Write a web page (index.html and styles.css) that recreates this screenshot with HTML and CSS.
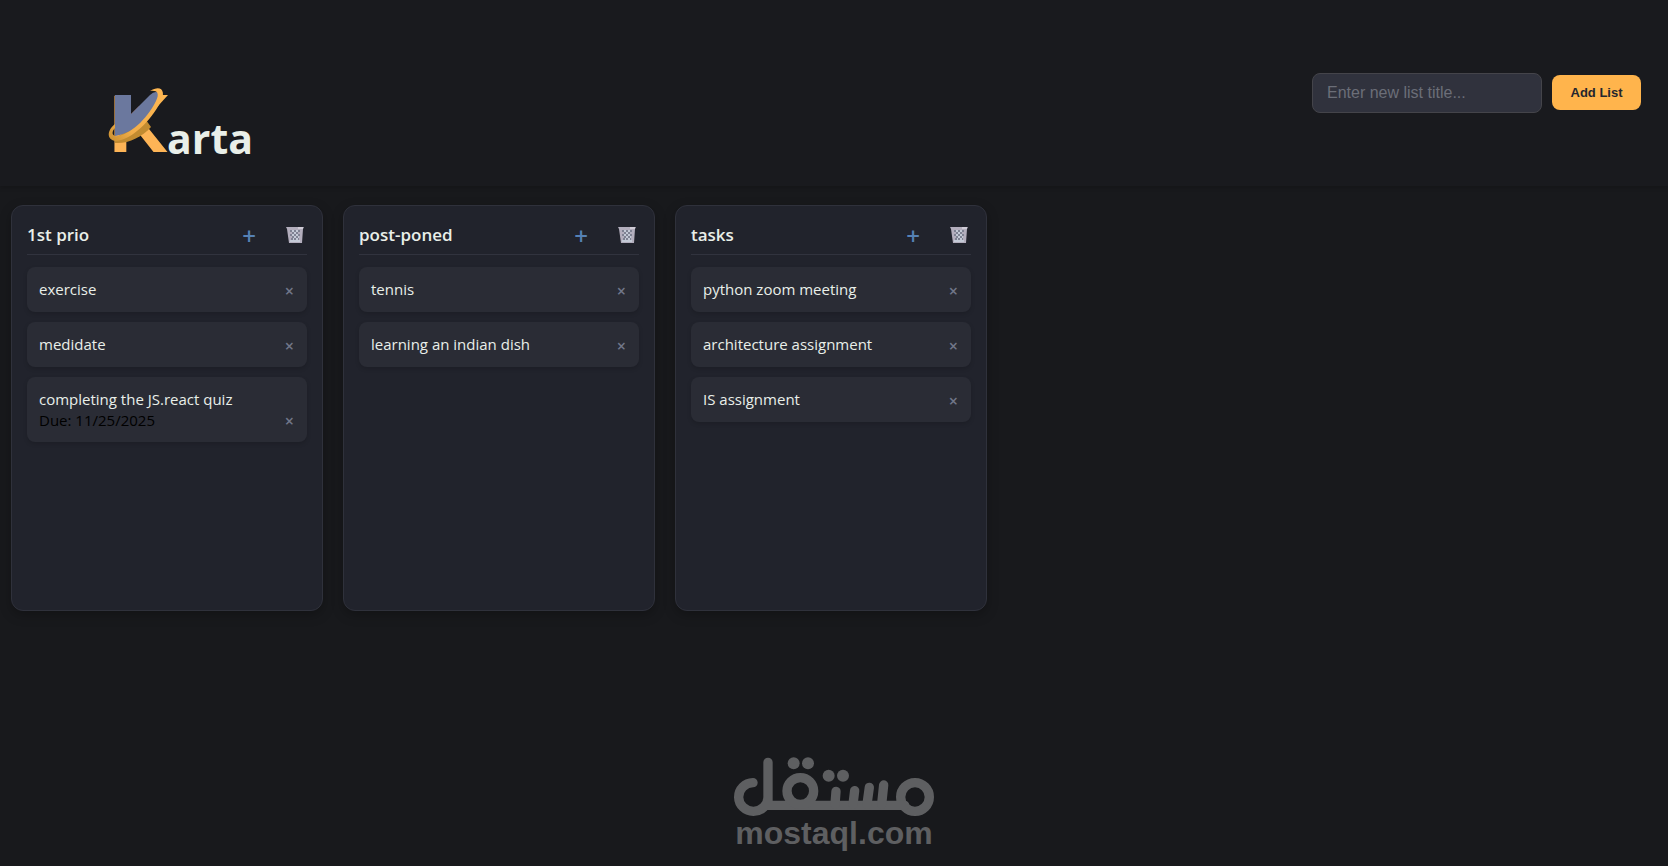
FILE: index.html
```html
<!DOCTYPE html>
<html lang="en">

<head>
    <meta charset="UTF-8">
    <meta name="viewport" content="width=device-width, initial-scale=1.0">
    <title>Karta</title>
    <link rel="stylesheet" href="styles.css">
</head>

<body>
    <!-- Shared trash icon -->
    <svg class="sprite" aria-hidden="true">
        <symbol id="trash" viewBox="0 0 18 18">
            <path d="M0 1h18l-1 2-1 14H3L1 3z" fill="#b3aebd" />
            <path d="M12 2h5" stroke="#ece8ef" />
            <path d="M4 5h2M8 5h2M12 5h2M6 7h2M10 7h2M4 9h2M8 9h2M12 9h2M6 11h2M10 11h2M5 13h2M8 13h2M12 13h1" stroke="#4a5668" />
            <path d="M6 5h2M10 5h2M8 7h2M6 9h2M10 9h2M8 11h2M12 11h1M7 13h1M10 13h2M4 15h10" stroke="#d5e6f0" />
        </symbol>
    </svg>

    <header class="header">
        <h1 class="logo">
            <svg class="logo-mark" viewBox="0 0 60 68" role="img" aria-label="K">
                <defs>
                    <linearGradient id="ring" x1="0" y1="1" x2="1" y2="0">
                        <stop offset="0" stop-color="#c98f30" />
                        <stop offset="0.3" stop-color="#f2ae4a" />
                        <stop offset="1" stop-color="#ffb752" />
                    </linearGradient>
                </defs>
                <text class="logo-letter" x="1" y="66">K</text>
                <path d="M7 57C20 58 34 51 43 41L38 34L7 52z" fill="#c28b30" />
                <path d="M23 28L31 20L30 26L24 32z" fill="#a6532f" />
                <path d="M7 9H23V28L42 9Q47 4 51 7C52 20 32 46 7 50z" fill="#6b789e" />
                <path d="M50 9H60L50 20z" fill="#ffb752" />
                <path d="M42 5C53-2 59 5 52 17C43 34 24 54 8 55C-2 54-1 44 7 38V42C3 46 4 51 10 50C26 47 41 29 48 15C52 7 49 4 42 5z" fill="url(#ring)" />
            </svg>
            <span>arta</span>
        </h1>
        <form class="add-list">
            <input type="text" class="list-input" placeholder="Enter new list title..." aria-label="New list title">
            <button type="button" class="add-btn">Add List</button>
        </form>
    </header>

    <main class="board">
        <section class="list">
            <div class="list-header">
                <h2>1st prio</h2>
                <button type="button" class="icon-btn plus" aria-label="Add card">+</button>
                <button type="button" class="icon-btn" aria-label="Delete list"><svg class="trash"><use href="#trash" /></svg></button>
            </div>
            <ul class="cards">
                <li class="card"><span>exercise</span><button type="button" class="remove" aria-label="Remove card">×</button></li>
                <li class="card"><span>medidate</span><button type="button" class="remove" aria-label="Remove card">×</button></li>
                <li class="card">
                    <div>
                        <span>completing the JS.react quiz</span>
                        <div class="due">Due: 11/25/2025</div>
                    </div>
                    <button type="button" class="remove" aria-label="Remove card">×</button>
                </li>
            </ul>
        </section>

        <section class="list">
            <div class="list-header">
                <h2>post-poned</h2>
                <button type="button" class="icon-btn plus" aria-label="Add card">+</button>
                <button type="button" class="icon-btn" aria-label="Delete list"><svg class="trash"><use href="#trash" /></svg></button>
            </div>
            <ul class="cards">
                <li class="card"><span>tennis</span><button type="button" class="remove" aria-label="Remove card">×</button></li>
                <li class="card"><span>learning an indian dish</span><button type="button" class="remove" aria-label="Remove card">×</button></li>
            </ul>
        </section>

        <section class="list">
            <div class="list-header">
                <h2>tasks</h2>
                <button type="button" class="icon-btn plus" aria-label="Add card">+</button>
                <button type="button" class="icon-btn" aria-label="Delete list"><svg class="trash"><use href="#trash" /></svg></button>
            </div>
            <ul class="cards">
                <li class="card"><span>python zoom meeting</span><button type="button" class="remove" aria-label="Remove card">×</button></li>
                <li class="card"><span>architecture assignment</span><button type="button" class="remove" aria-label="Remove card">×</button></li>
                <li class="card"><span>IS assignment</span><button type="button" class="remove" aria-label="Remove card">×</button></li>
            </ul>
        </section>
    </main>

    <!-- Watermark -->
    <div class="watermark">
        <svg viewBox="0 0 600 177" role="img" aria-label="مستقل">
            <g fill="none" stroke="#5e5f61" stroke-width="28" stroke-linecap="round" stroke-linejoin="round">
                <circle cx="543" cy="120" r="43" />
                <path d="M512 145H102V16M102 120A44 43 0 1 1 57 77" />
                <circle cx="199" cy="102" r="40" />
                <path d="M306 103L303 142M362 101L357 142M406 91L399 142M449 84L443 142" />
            </g>
            <g fill="#5e5f61">
                <circle cx="179" cy="19" r="18" />
                <circle cx="222" cy="19" r="18" />
                <circle cx="284" cy="56" r="18" />
                <circle cx="327" cy="56" r="18" />
            </g>
        </svg>
        <span>mostaql.com</span>
    </div>
</body>

</html>
```

FILE: styles.css
```css
* {
    box-sizing: border-box;
}

body {
    margin: 0;
    min-height: 100vh;
    background-color: #18191c;
    color: #e9efe9;
    font-family: "Segoe UI", "Open Sans", "Noto Sans", sans-serif;
}

.sprite {
    display: none;
}

/* Header */

.header {
    display: flex;
    justify-content: space-between;
    align-items: flex-start;
    padding: 72px 27px 24px 108px;
    background-color: #191a1e;
    box-shadow: 0 2px 4px rgba(0, 0, 0, 0.15);
}

.logo {
    display: flex;
    align-items: flex-end;
    margin: 0;
    padding-top: 14px;
    font-size: 41px;
    line-height: 48px;
    font-weight: 700;
}

.logo-mark {
    width: 60px;
    height: 68px;
    margin-bottom: 8px;
    margin-right: -1px;
    overflow: visible;
}

.logo-letter {
    font-family: "Liberation Sans", Arial, sans-serif;
    font-size: 82px;
    fill: #fdb456;
}

.add-list {
    display: flex;
    align-items: center;
    gap: 10px;
}

.list-input {
    width: 230px;
    height: 40px;
    margin-top: 1px;
    padding: 0 14px;
    border: 1px solid #44444a;
    border-radius: 8px;
    background-color: #30323d;
    color: #e9efe9;
    font-family: "Liberation Sans", Arial, sans-serif;
    font-size: 16px;
}

.list-input::placeholder {
    color: #6b6e78;
}

.add-btn {
    width: 89px;
    height: 35px;
    padding: 0;
    border: none;
    border-radius: 8px;
    background-color: #ffb44c;
    color: #24262e;
    font-family: "Liberation Sans", Arial, sans-serif;
    font-size: 13px;
    font-weight: 700;
    cursor: pointer;
}

/* Board */

.board {
    display: flex;
    align-items: flex-start;
    gap: 20px;
    padding: 19px 11px;
}

.list {
    width: 312px;
    min-height: 406px;
    padding: 15px;
    border: 1px solid #2f313b;
    border-radius: 12px;
    background-color: #21232c;
    box-shadow: 0 4px 12px rgba(0, 0, 0, 0.25);
}

.list-header {
    display: flex;
    align-items: center;
    height: 34px;
    padding-bottom: 6px;
    margin-bottom: 12px;
    border-bottom: 1px solid #31333e;
}

.list-header h2 {
    flex: 1;
    margin: 0;
    font-size: 17px;
    line-height: 24px;
    font-weight: 600;
}

.icon-btn {
    display: flex;
    justify-content: center;
    align-items: center;
    width: 24px;
    height: 24px;
    padding: 0;
    border: none;
    background: none;
    cursor: pointer;
}

.plus {
    margin-right: 22px;
    padding-top: 2px;
    color: #5581b5;
    font-family: inherit;
    font-size: 24px;
    line-height: 24px;
    font-weight: 600;
}

.trash {
    width: 18px;
    height: 18px;
}

.cards {
    display: flex;
    flex-direction: column;
    gap: 10px;
    margin: 0;
    padding: 0;
    list-style: none;
}

.card {
    display: flex;
    justify-content: space-between;
    align-items: flex-end;
    padding: 12px;
    border-radius: 8px;
    background-color: #2a2c35;
    box-shadow: 0 2px 4px rgba(0, 0, 0, 0.15);
    font-size: 15px;
    line-height: 21px;
}

.due {
    line-height: 20px;
    color: #000;
}

.remove {
    padding: 0 1px;
    border: none;
    background: none;
    color: #717789;
    font-family: inherit;
    font-size: 16px;
    line-height: 18px;
    font-weight: 600;
    cursor: pointer;
}

/* Watermark */

.watermark {
    position: absolute;
    left: 50%;
    bottom: 16px;
    width: 200px;
    margin-left: -100px;
    color: #5e5f61;
    font-family: "Liberation Sans", Arial, sans-serif;
    font-size: 32px;
    line-height: 34px;
    font-weight: 700;
    text-align: center;
    pointer-events: none;
}

.watermark svg {
    display: block;
    width: 100%;
    overflow: visible;
}
```
